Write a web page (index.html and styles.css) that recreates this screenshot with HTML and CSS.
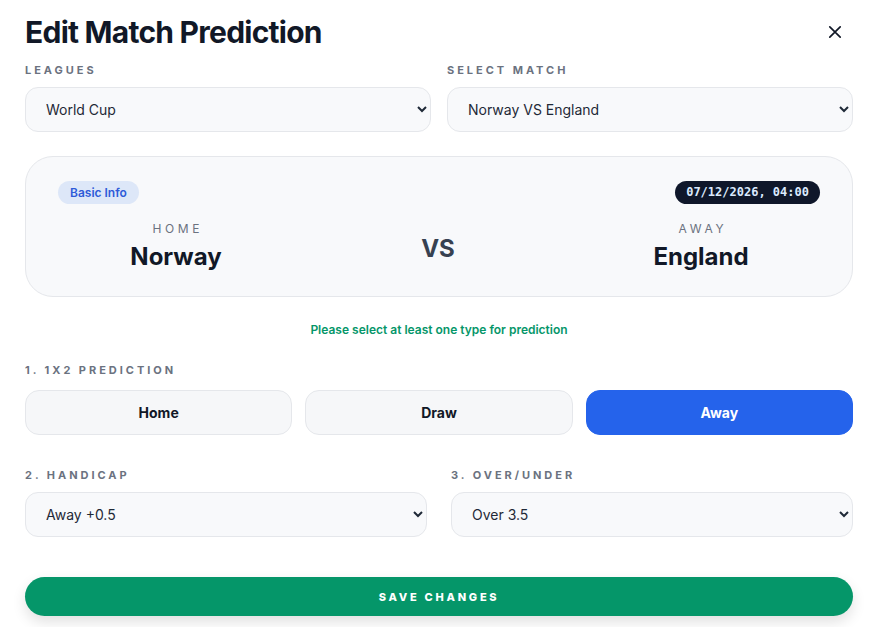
FILE: index.html
```html
<!DOCTYPE html>
<html lang="en">
<head>
<meta charset="utf-8">
<title>Edit Match Prediction</title>
<link rel="stylesheet" href="styles.css">
</head>
<body>
<div class="modal">
  <header class="head">
    <h1 class="title">Edit Match Prediction</h1>
    <button class="close" aria-label="Close">
      <svg width="14" height="14" viewBox="0 0 14 14"><path d="M1.8 1.8L12.2 12.2M12.2 1.8L1.8 12.2" stroke="#111827" stroke-width="1.7" stroke-linecap="round"/></svg>
    </button>
  </header>

  <div class="row two">
    <div class="field">
      <label class="label">Leagues</label>
      <select class="select"><option>World Cup</option></select>
    </div>
    <div class="field">
      <label class="label">Select Match</label>
      <select class="select"><option>Norway VS England</option></select>
    </div>
  </div>

  <section class="card">
    <div class="badges">
      <span class="badge-info">Basic Info</span>
      <span class="badge-date">07/12/2026, 04:00</span>
    </div>
    <div class="teams">
      <div class="team">
        <div class="side">Home</div>
        <div class="name">Norway</div>
      </div>
      <div class="vs">VS</div>
      <div class="team">
        <div class="side">Away</div>
        <div class="name">England</div>
      </div>
    </div>
  </section>

  <p class="hint">Please select at least one type for prediction</p>

  <div class="field pick">
    <label class="label">1. 1X2 Prediction</label>
    <div class="choices">
      <button class="choice">Home</button>
      <button class="choice">Draw</button>
      <button class="choice active">Away</button>
    </div>
  </div>

  <div class="row two wide">
    <div class="field">
      <label class="label">2. Handicap</label>
      <select class="select"><option>Away +0.5</option></select>
    </div>
    <div class="field">
      <label class="label">3. Over/Under</label>
      <select class="select"><option>Over 3.5</option></select>
    </div>
  </div>

  <button class="save">Save Changes</button>
</div>
</body>
</html>
```

FILE: styles.css
```css
* { box-sizing: border-box; }
html, body { margin: 0; background: #ffffff; }
body {
  font-family: Inter, "Noto Sans", "Liberation Sans", sans-serif;
  color: #111827;
}
.modal {
  width: 880px;
  height: 627px;
  padding: 14px 27px 0 25px;
  background: #ffffff;
}
.head {
  display: flex;
  align-items: center;
  justify-content: space-between;
  height: 36px;
}
.title {
  margin: 0;
  font-size: 30px;
  line-height: 36px;
  font-weight: 700;
  letter-spacing: -0.025em;
  color: #111827;
}
.close {
  border: 0;
  background: none;
  padding: 0;
  margin-right: 11px;
  width: 14px;
  height: 14px;
  display: flex;
}
.row.two {
  display: grid;
  grid-template-columns: 1fr 1fr;
  column-gap: 16px;
  margin-top: 13px;
}
.row.two.wide { column-gap: 24px; margin-top: 33px; }
.field { display: flex; flex-direction: column; }
.label {
  display: block;
  font-size: 11px;
  line-height: 14px;
  font-weight: 700;
  letter-spacing: 0.27em;
  text-transform: uppercase;
  color: #6b7280;
  margin-bottom: 10px;
}
.pick .label { margin-bottom: 13px; }
.select {
  height: 45px;
  width: 100%;
  border: 1px solid #e5e7eb;
  border-radius: 13px;
  background: #f8f9fb;
  padding: 0 8px 0 16px;
  font-family: Inter, "Noto Sans", sans-serif;
  font-size: 14px;
  color: #1f2937;
}
.card {
  margin-top: 24px;
  height: 141px;
  border: 1px solid #e5e7eb;
  border-radius: 28px;
  background: #f8f9fb;
  padding: 24px 32px 0 32px;
}
.badges {
  display: flex;
  justify-content: space-between;
  align-items: center;
}
.badge-info {
  height: 23px;
  line-height: 23px;
  padding: 0 12px;
  border-radius: 12px;
  background: #dde7f8;
  color: #2e5bd8;
  font-size: 12px;
  font-weight: 600;
}
.badge-date {
  height: 23px;
  line-height: 23px;
  padding: 0 11px;
  border-radius: 12px;
  background: #0f172a;
  color: #dbeafe;
  font-family: "DejaVu Sans Mono", "Liberation Mono", monospace;
  font-size: 12px;
  font-weight: 700;
}
.teams {
  display: grid;
  grid-template-columns: 236px 1fr 238px;
  align-items: center;
  margin-top: 17px;
}
.team { text-align: center; }
.side {
  font-size: 12px;
  line-height: 16px;
  letter-spacing: 0.3em;
  text-transform: uppercase;
  color: #6b7280;
  padding-left: 0.3em;
}
.name {
  font-size: 24px;
  line-height: 30px;
  font-weight: 700;
  color: #111827;
  margin-top: 5px;
}
.vs {
  text-align: center;
  font-size: 24px;
  font-weight: 700;
  color: #374151;
  padding-top: 4px;
}
.hint {
  margin: 25px 0 0;
  text-align: center;
  font-size: 12px;
  line-height: 16px;
  font-weight: 600;
  color: #059669;
}
.hint + .field { margin-top: 25px; }
.choices {
  display: grid;
  grid-template-columns: repeat(3, 1fr);
  column-gap: 13px;
}
.choice {
  height: 45px;
  border: 1px solid #e5e7eb;
  border-radius: 14px;
  background: #f6f7f9;
  font-family: Inter, "Noto Sans", sans-serif;
  font-size: 14px;
  font-weight: 700;
  color: #111827;
}
.choice.active {
  background: #2563eb;
  border-color: #2563eb;
  color: #ffffff;
}
.save {
  display: block;
  width: 100%;
  height: 39px;
  margin-top: 40px;
  border: 0;
  border-radius: 20px;
  background: #059669;
  color: #ffffff;
  font-family: Inter, "Noto Sans", sans-serif;
  font-size: 11px;
  font-weight: 800;
  letter-spacing: 0.25em;
  text-transform: uppercase;
  box-shadow: 0 6px 14px rgba(0, 0, 0, 0.12);
}
```
